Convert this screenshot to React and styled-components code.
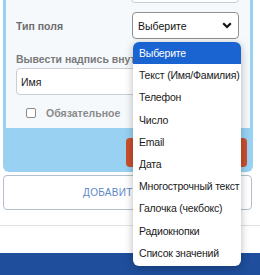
import React from 'react'
import styled, { createGlobalStyle } from 'styled-components'

const options = [
  'Выберите',
  'Текст (Имя/Фамилия)',
  'Телефон',
  'Число',
  'Email',
  'Дата',
  'Многострочный текст',
  'Галочка (чекбокс)',
  'Радиокнопки',
  'Список значений',
]

function App() {
  return (
    <Page>
      <GlobalStyle />
      <Card>
        <Inner>
          <Row>
            <span />
            <TopInput />
          </Row>
          <Row style={{ marginTop: 11 }}>
            <Label>Тип поля</Label>
            <Select>
              <span>Выберите</span>
              <svg width="10" height="7" viewBox="0 0 10 7">
                <path d="M1.2 1.3 L5 5 L8.8 1.3" fill="none" stroke="#111" strokeWidth="2.2" />
              </svg>
            </Select>
          </Row>
          <BlockLabel>Вывести надпись внутри поля</BlockLabel>
          <WideInput>Имя</WideInput>
          <CheckRow>
            <Box />
            <CheckText>Обязательное</CheckText>
          </CheckRow>
        </Inner>
        <CardFooter>
          <DangerButton>Удалить</DangerButton>
        </CardFooter>
      </Card>
      <AddButton>Добавить поле</AddButton>
      <Divider />
      <BottomBand />
      <Menu>
        {options.map((o, i) => (
          <MenuItem key={o} active={i === 0}>{o}</MenuItem>
        ))}
      </Menu>
    </Page>
  )
}

export default App

const GlobalStyle = createGlobalStyle`
  body {
    margin:0;
    background:#fff;
    font-family:"Liberation Sans", Arial, sans-serif;
  }
`

const Page = styled.div`
  position:relative;
  width:260px;
  height:275px;
  overflow:hidden;
  background:#fff;
`

const Card = styled.div`
  margin:-26px 7px 0 3px;
  background:#98d1f2;
  border-radius:0 0 6px 6px;
  padding:0 3px 0 3px;
`

const Inner = styled.div`
  background:#f6f9fc;
  padding:0 11px 9px 10px;
`

const Row = styled.div`
  display:grid;
  grid-template-columns:1fr 107px;
  align-items:center;
  height:27px;
`

const TopInput = styled.div`
  height:27px;
  border:1px solid #c9ced4;
  border-radius:4px;
  background:#fff;
  margin-left:-1px;
`

const Label = styled.span`
  font-size:10.5px;
  font-weight:bold;
  color:#6d6d6d;
`

const Select = styled.div`
  box-sizing:border-box;
  height:27px;
  border:1px solid #8f8f8f;
  border-radius:4px;
  background:#fff;
  display:flex;
  align-items:center;
  justify-content:space-between;
  padding:0 6px 0 5px;
  font-size:10.5px;
  color:#111;
`

const BlockLabel = styled.div`
  margin-top:14px;
  font-size:10.5px;
  line-height:13px;
  font-weight:bold;
  color:#7a7a7a;
  white-space:nowrap;
`

const WideInput = styled.div`
  box-sizing:border-box;
  margin-top:2px;
  height:27px;
  border:1px solid #c9ced4;
  border-radius:4px;
  background:#fff;
  display:flex;
  align-items:center;
  padding-left:4px;
  font-size:10.5px;
  color:#222;
`

const CheckRow = styled.div`
  margin-top:11px;
  display:flex;
  align-items:center;
  height:13px;
  padding-left:10px;
`

const Box = styled.span`
  width:10px;
  height:10px;
  box-sizing:border-box;
  border:1px solid #8a8a8a;
  border-radius:2px;
  background:#fff;
`

const CheckText = styled.span`
  margin-left:10px;
  font-size:10.5px;
  font-weight:bold;
  color:#8a8a8a;
`

const CardFooter = styled.div`
  display:flex;
  justify-content:flex-end;
  padding:10px 3px 5px 0;
`

const DangerButton = styled.div`
  width:121px;
  height:29px;
  border-radius:4px;
  background:#c94f2d;
  color:#fff;
  font-size:11px;
  display:flex;
  align-items:center;
  justify-content:center;
  text-transform:uppercase;
`

const AddButton = styled.div`
  margin:3px 8px 0 3px;
  height:35px;
  box-sizing:border-box;
  border:1px solid #b3bfcd;
  border-radius:4px;
  display:flex;
  align-items:center;
  justify-content:center;
  font-size:10px;
  letter-spacing:0.3px;
  text-transform:uppercase;
  color:#5e88c6;
`

const Divider = styled.div`
  margin-top:15px;
  height:1px;
  background:#e2e2e2;
`

const BottomBand = styled.div`
  margin-top:27px;
  height:30px;
  background:#1e4e9c;
`

const Menu = styled.div`
  position:absolute;
  left:133px;
  top:42px;
  width:108px;
  padding-bottom:2px;
  background:#fff;
  border-radius:6px;
  box-shadow:0 2px 8px rgba(0,0,0,0.28);
  overflow:hidden;
`

const MenuItem = styled.div`
  height:22.2px;
  display:flex;
  align-items:center;
  padding-left:6px;
  font-size:10.5px;
  letter-spacing:-0.2px;
  white-space:nowrap;
  color:${p => (p.active ? '#fff' : '#1a1a1a')};
  background:${p => (p.active ? '#1a64d2' : 'transparent')};
`
